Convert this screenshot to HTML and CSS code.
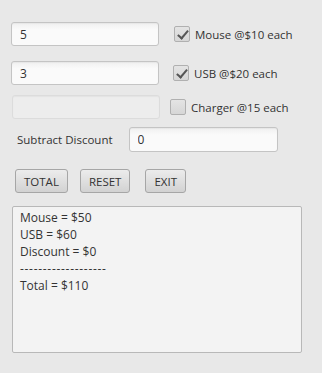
FILE: index.html
```html
<!DOCTYPE html>
<html lang="en">
<head>
    <meta charset="UTF-8">
    <title>Order Calculator</title>
    <link rel="stylesheet" href="styles.css">
</head>
<body>
    <div class="window">
        <div class="row row-mouse">
            <input class="field" type="text" value="5">
            <label class="check"><span class="box checked"></span>Mouse @$10 each</label>
        </div>
        <div class="row row-usb">
            <input class="field" type="text" value="3">
            <label class="check"><span class="box checked"></span>USB @$20 each</label>
        </div>
        <div class="row row-charger">
            <input class="field" type="text" value="" disabled>
            <label class="check"><span class="box"></span>Charger @15 each</label>
        </div>
        <div class="row row-discount">
            <span class="label">Subtract Discount</span>
            <input class="field discount" type="text" value="0">
        </div>
        <div class="buttons">
            <button class="btn btn-total">TOTAL</button>
            <button class="btn btn-reset">RESET</button>
            <button class="btn btn-exit">EXIT</button>
        </div>
        <div class="output">
            <div>Mouse = $50</div>
            <div>USB = $60</div>
            <div>Discount = $0</div>
            <div class="rule">-------------------</div>
            <div>Total = $110</div>
        </div>
    </div>
</body>
</html>
```

FILE: styles.css
```css
body {
    margin: 0;
    background-color: #e8e8e8;
    font-family: 'Open Sans', 'DejaVu Sans', sans-serif;
    font-size: 11.5px;
    color: #333;
}

.window {
    display: flex;
    flex-direction: column;
    padding: 22px 0 0 11px;
}

.row {
    display: flex;
    align-items: center;
    height: 24px;
}

.row-usb {
    margin-top: 15px;
}

.row-charger {
    margin-top: 10px;
    margin-left: 1px;
}

.row-discount {
    margin-top: 8px;
    height: 25px;
    margin-left: 6px;
}

.field {
    box-sizing: border-box;
    width: 148px;
    height: 24px;
    margin: 0;
    padding: 0 8px;
    border: 1px solid #c4c4c4;
    border-radius: 3px;
    background: linear-gradient(#f0f0f0, #fafafa 30%);
    font-family: inherit;
    font-size: 12px;
    color: #333;
    box-shadow: inset 0 1px 1px rgba(0, 0, 0, 0.04);
}

.field:disabled {
    border-color: #dcdcdc;
    background: #ededed;
}

.discount {
    width: 149px;
    height: 25px;
    margin-left: 16px;
}

.check {
    display: flex;
    align-items: center;
    margin-left: 15px;
    white-space: nowrap;
}

.row-usb .check {
    margin-left: 14px;
}

.row-charger .check {
    margin-left: 10px;
}

.box {
    box-sizing: border-box;
    width: 16px;
    height: 16px;
    margin-right: 5px;
    border: 1px solid #b0b0b0;
    border-radius: 2px;
    background: linear-gradient(#e4e4e4, #d6d6d6);
    position: relative;
}

.box.checked::after {
    content: "";
    position: absolute;
    left: 5px;
    top: 1px;
    width: 4px;
    height: 9px;
    border: solid #555;
    border-width: 0 2px 2px 0;
    transform: rotate(40deg);
}

.buttons {
    display: flex;
    gap: 12px;
    margin-top: 17px;
    margin-left: 4px;
}

.btn {
    box-sizing: border-box;
    height: 24px;
    padding: 0 8px;
    border: 1px solid #a6a6a6;
    border-radius: 3px;
    background: linear-gradient(#ececec, #d2d2d2);
    font-family: inherit;
    font-size: 11.5px;
    color: #333;
}

.btn-exit {
    margin-left: 3px;
}

.output {
    box-sizing: border-box;
    width: 290px;
    height: 147px;
    margin-top: 13px;
    margin-left: 1px;
    padding: 2px 7px;
    border: 1px solid #b8b8b8;
    border-radius: 2px;
    background-color: #f3f3f3;
    font-size: 12px;
    line-height: 17px;
}

.rule {
    letter-spacing: 0.7px;
}
```
